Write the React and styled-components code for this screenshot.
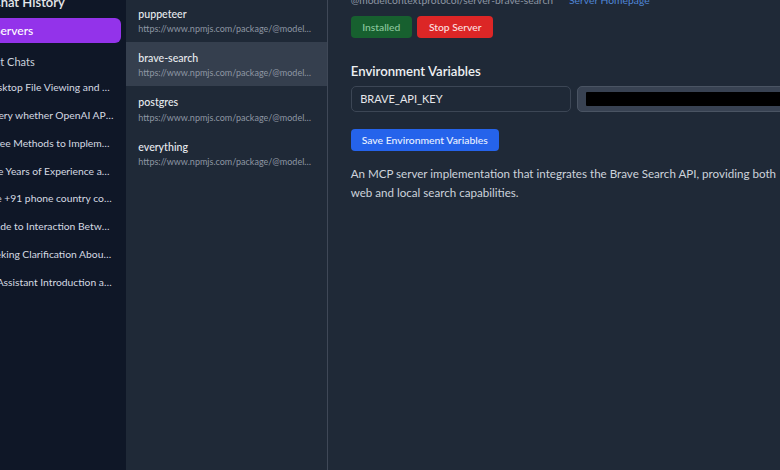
import React from "react";
import styled, { createGlobalStyle } from "styled-components";
import { History, Server } from "lucide-react";

const Global = createGlobalStyle`
  html, body { margin: 0; padding: 0; background: #1f2937; overflow: hidden; }
  body { font-family: Lato, "Noto Sans", sans-serif; -webkit-font-smoothing: antialiased; }
  * { box-sizing: border-box; }
`;

/* The picture is a crop of a wider app window: the frame is shifted up and left. */
const Viewport = styled.div`
  width: 780px;
  height: 470px;
  overflow: hidden;
`;

const Frame = styled.div`
  display: flex;
  width: 1020px;
  height: 510px;
  margin: -40px 0 0 -40px;
`;

const Sidebar = styled.aside`
  width: 166px;
  flex: none;
  background: #0f1727;
  padding: 31px 5px 0 8px;
  display: flex;
  flex-direction: column;
`;

const SideHeader = styled.div`
  display: flex;
  align-items: center;
  gap: 8px;
  height: 21px;
  color: #e5e7eb;
  font-size: 13px;
  font-weight: 600;
`;

const NavButton = styled.div`
  display: flex;
  align-items: center;
  gap: 4px;
  height: 24.4px;
  margin-top: 6.3px;
  padding-left: 8px;
  border-radius: 6px;
  background: ${(p) => (p.$active ? "#9333ea" : "transparent")};
  color: #ffffff;
  font-size: 12px;
  font-weight: 500;
`;

const SectionLabel = styled.div`
  height: 20px;
  margin-top: 9px;
  padding-left: 3px;
  display: flex;
  align-items: center;
  color: #cbd2dc;
  font-size: 11px;
`;

const ChatList = styled.div`
  display: flex;
  flex-direction: column;
  padding-top: 1.6px;
`;

const ChatItem = styled.div`
  height: 27.8px;
  display: flex;
  align-items: center;
  padding: 0 7px 0 16.5px;
  color: #d5dae2;
  font-size: 10.3px;
  min-width: 0;
  span {
    white-space: nowrap;
    overflow: hidden;
    text-overflow: ellipsis;
  }
`;

const ServerColumn = styled.section`
  width: 202px;
  flex: none;
  background: #1f2937;
  border-right: 1px solid #3f4857;
  padding-top: 37.7px;
  display: flex;
  flex-direction: column;
`;

const ServerRow = styled.div`
  height: 44.3px;
  padding: 9px 14px 0 12.3px;
  background: ${(p) => (p.$selected ? "#353f4e" : "transparent")};
  display: flex;
  flex-direction: column;
  min-width: 0;
`;

const ServerName = styled.div`
  color: #e8ebef;
  font-size: 10.6px;
  line-height: 14px;
  font-weight: 500;
`;

const ServerUrl = styled.div`
  margin-top: 1.5px;
  color: #8d96a3;
  font-size: 9px;
  line-height: 13px;
  white-space: nowrap;
  overflow: hidden;
  text-overflow: ellipsis;
`;

const Main = styled.main`
  flex: 1;
  background: #1f2937;
  padding: 32px 0 0 22.7px;
`;

const Content = styled.div`
  width: 446.6px;
  display: flex;
  flex-direction: column;
`;

const MetaLine = styled.div`
  display: flex;
  gap: 16px;
  height: 16px;
  align-items: center;
  font-size: 10.3px;
  white-space: nowrap;
`;

const PackageName = styled.span`
  color: #8d96a3;
`;

const Link = styled.a`
  color: #4f86d6;
  text-decoration: none;
`;

const ButtonRow = styled.div`
  display: flex;
  gap: 5.6px;
  margin-top: 8px;
`;

const Pill = styled.div`
  height: 21.7px;
  padding: 0 11.5px;
  border-radius: 4px;
  display: flex;
  align-items: center;
  font-size: 10.3px;
  font-weight: 500;
  background: ${(p) => p.$bg};
  color: ${(p) => p.$fg};
`;

const Heading = styled.h3`
  margin: 24.3px 0 0;
  height: 18px;
  line-height: 18px;
  color: #eef0f3;
  font-size: 13.2px;
  font-weight: 600;
`;

const EnvGrid = styled.div`
  display: grid;
  grid-template-columns: 220px 220px;
  gap: 6.6px;
  margin-top: 6px;
`;

const Field = styled.div`
  height: 26px;
  border-radius: 5px;
  border: 1.5px solid ${(p) => (p.$filled ? "#4a5463" : "#3c4655")};
  background: ${(p) => (p.$filled ? "#384252" : "transparent")};
  display: flex;
  align-items: center;
  padding: 0 6px 0 8.5px;
  color: #e5e7eb;
  font-size: 11px;
`;

const Redacted = styled.span`
  flex: 1;
  height: 14px;
  margin-left: -1px;
  background: #000;
  border-radius: 1px;
`;

const SaveButton = styled.div`
  align-self: flex-start;
  height: 21.7px;
  margin-top: 17.3px;
  padding: 0 11px;
  border-radius: 4px;
  background: #2563eb;
  color: #eaf1ff;
  font-size: 10.4px;
  font-weight: 500;
  display: flex;
  align-items: center;
`;

const Description = styled.p`
  width: 436px;
  margin: 12.6px 0 0;
  color: #cdd3dc;
  font-size: 11.6px;
  line-height: 19.4px;
`;

const chats = [
  "Desktop File Viewing and Editing Tools",
  "Query whether OpenAI API supports streaming",
  "Three Methods to Implement Caching",
  "Five Years of Experience and Career Growth",
  "The +91 phone country code belongs to India",
  "Guide to Interaction Between Frontend and Backend",
  "Seeking Clarification About the Request",
  "AI Assistant Introduction and Capabilities",
];

const servers = [
  { name: "puppeteer", url: "https://www.npmjs.com/package/@modelcontextprotocol/server-puppeteer" },
  { name: "brave-search", url: "https://www.npmjs.com/package/@modelcontextprotocol/server-brave-search", selected: true },
  { name: "postgres", url: "https://www.npmjs.com/package/@modelcontextprotocol/server-postgres" },
  { name: "everything", url: "https://www.npmjs.com/package/@modelcontextprotocol/server-everything" },
];

export default function App() {
  return (
    <Viewport>
      <Global />
      <Frame>
        <Sidebar>
          <SideHeader>
            <History size={16} />
            Chat History
          </SideHeader>
          <NavButton $active>
            <Server size={14} />
            Servers
          </NavButton>
          <SectionLabel>Recent Chats</SectionLabel>
          <ChatList>
            {chats.map((c) => (
              <ChatItem key={c}>
                <span>{c}</span>
              </ChatItem>
            ))}
          </ChatList>
        </Sidebar>
        <ServerColumn>
          {servers.map((s) => (
            <ServerRow key={s.name} $selected={s.selected}>
              <ServerName>{s.name}</ServerName>
              <ServerUrl>{s.url}</ServerUrl>
            </ServerRow>
          ))}
        </ServerColumn>
        <Main>
          <Content>
            <MetaLine>
              <PackageName>@modelcontextprotocol/server-brave-search</PackageName>
              <Link href="#">Server Homepage</Link>
            </MetaLine>
            <ButtonRow>
              <Pill $bg="#17602f" $fg="#8cc79d">Installed</Pill>
              <Pill $bg="#dc2626" $fg="#fde0e0">Stop Server</Pill>
            </ButtonRow>
            <Heading>Environment Variables</Heading>
            <EnvGrid>
              <Field>BRAVE_API_KEY</Field>
              <Field $filled>
                <Redacted />
              </Field>
            </EnvGrid>
            <SaveButton>Save Environment Variables</SaveButton>
            <Description>
              An MCP server implementation that integrates the Brave Search API, providing both web and local search capabilities.
            </Description>
          </Content>
        </Main>
      </Frame>
    </Viewport>
  );
}
